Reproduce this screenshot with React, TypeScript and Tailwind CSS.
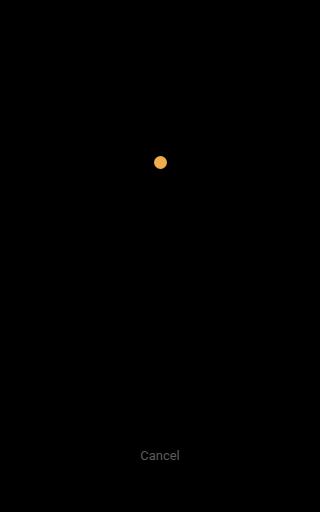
function App() {
  return (
    <div className="flex flex-col items-center h-[512px] w-full bg-black" style={{ fontFamily: 'Roboto, sans-serif' }}>
      <div className="mt-[156px] w-[13px] h-[13px] rounded-full bg-[#f0ad4e]"></div>
      <div className="flex-1"></div>
      <button className="mb-[47px] text-[13px] leading-[18px] text-[#5c5c5c]">Cancel</button>
    </div>
  )
}

export default App
